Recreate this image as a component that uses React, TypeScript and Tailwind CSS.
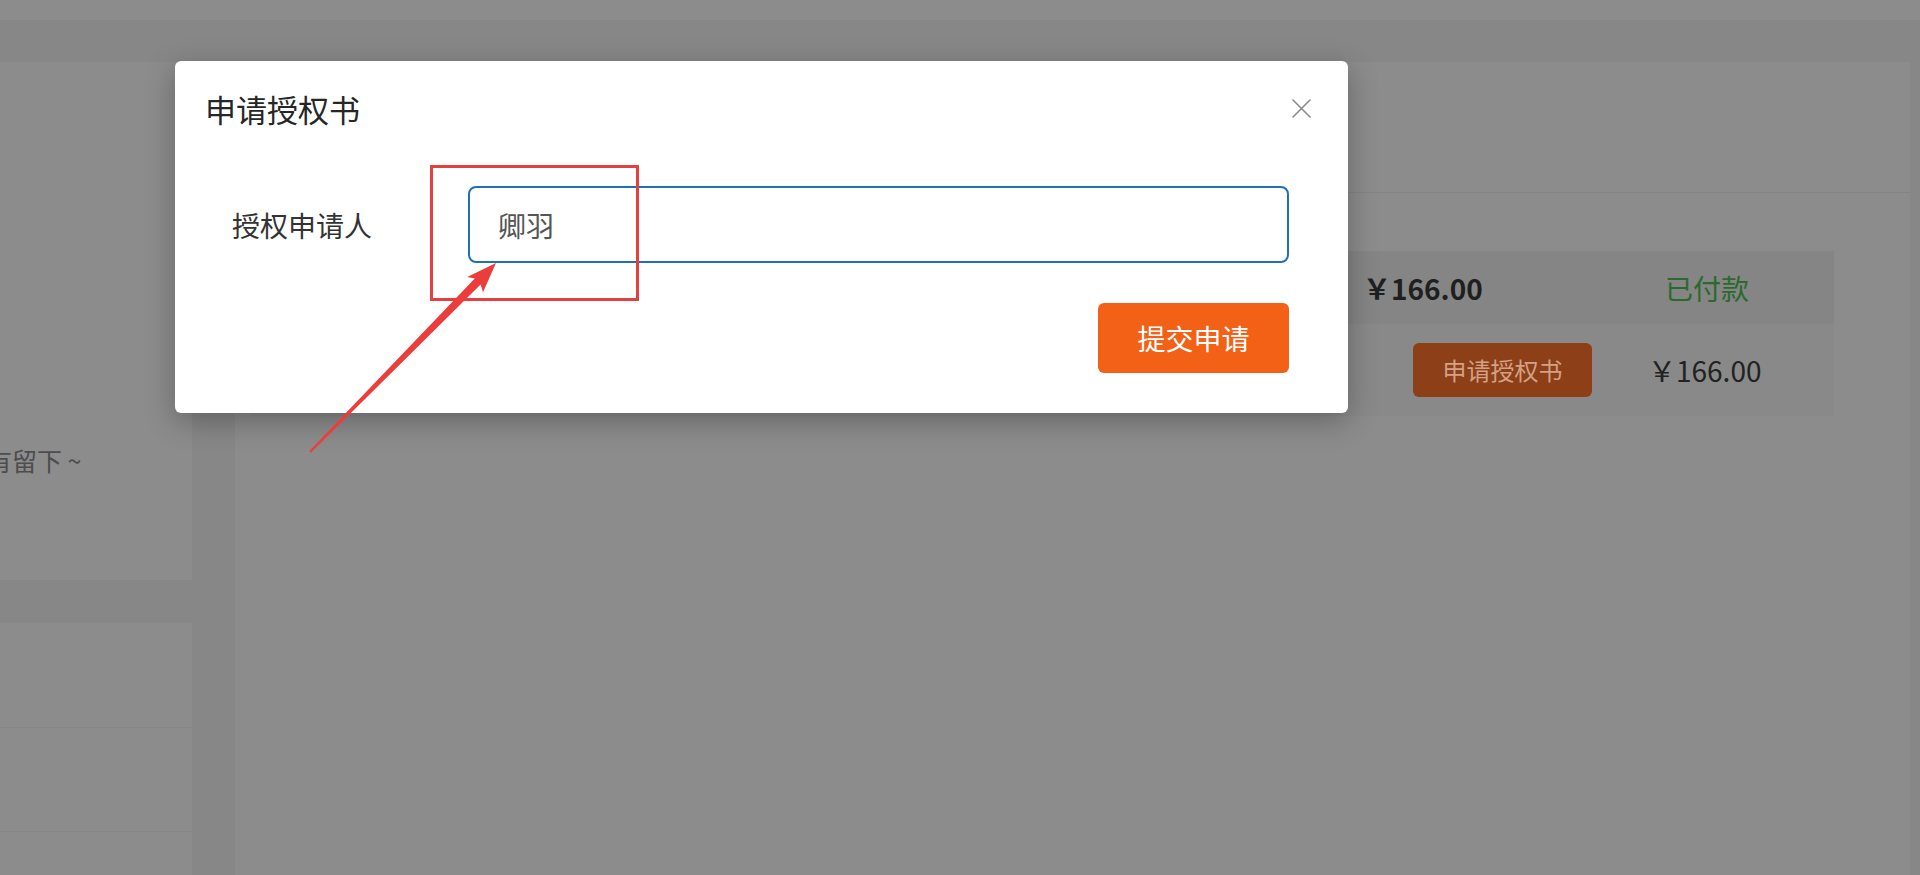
import React from "react";

function CloseIcon() {
  return (
    <svg width="19" height="19" viewBox="0 0 19 19" fill="none">
      <path d="M1 1 L18 18 M18 1 L1 18" stroke="#8a8a8a" strokeWidth="1.6" strokeLinecap="round" />
    </svg>
  );
}

export default function App() {
  return (
    <div className="relative h-[875px] w-[1920px] overflow-hidden bg-[#878787] font-['Noto_Sans_CJK_SC','Noto_Sans',sans-serif]">
      {/* dimmed page underneath */}
      <div className="h-[20px] bg-[#8c8c8c]" />
      <div className="h-[42px]" />
      <div className="flex h-[813px]">
        <div className="flex w-[192px] flex-col">
          <div className="h-[518px] overflow-hidden bg-[#8c8c8c] pt-[386px]">
            <div className="-ml-[13px] whitespace-nowrap text-[25px] leading-none text-[#4d4d4d]">有留下 ~</div>
          </div>
          <div className="h-[43px]" />
          <div className="flex-1 bg-[#8c8c8c]">
            <div className="h-[105px] border-b border-[#858585]" />
            <div className="h-[104px] border-b border-[#858585]" />
          </div>
        </div>
        <div className="w-[43px]" />
        <div className="w-[1675px] bg-[#8c8c8c]">
          <div className="h-[131px] border-b border-[#848484]" />
          <div className="pl-[16px] pr-[76px] pt-[58px]">
            <div className="flex h-[73px] items-center justify-end bg-[#858585]">
              <div className="flex w-[471px] items-center">
                <span className="w-[302px] whitespace-nowrap text-[28px] font-bold leading-none text-[#1f1f1f]">￥166.00</span>
                <span className="whitespace-nowrap text-[28px] leading-none text-[#2a6a2d]">已付款</span>
              </div>
            </div>
            <div className="flex h-[92px] items-center justify-end bg-[#898989]">
              <div className="flex h-[54px] w-[179px] items-center justify-center rounded-[6px] bg-[#8d3f17] text-[24px] leading-none text-[#d3a185]">
                申请授权书
              </div>
              <div className="w-[242px] pl-[56px] whitespace-nowrap text-[28px] leading-none text-[#222222]">￥166.00</div>
            </div>
          </div>
        </div>
      </div>

      {/* modal */}
      <div className="absolute left-[175px] top-[61px] w-[1173px] rounded-[6px] bg-white shadow-[0_8px_30px_rgba(0,0,0,0.28)]">
        <div className="flex h-[100px] items-center justify-between pb-[5px] pl-[30px] pr-[37px]">
          <div className="text-[31px] leading-none text-[#262626]">申请授权书</div>
          <CloseIcon />
        </div>
        <div className="mt-[25px] flex items-center pl-[57px] pr-[59px]">
          <div className="w-[236px] text-[28px] leading-none text-[#333333]">授权申请人</div>
          <input
            defaultValue="卿羽"
            className="h-[77px] flex-1 rounded-[8px] border-2 border-[#1f71b5] bg-white pl-[28px] text-[28px] text-[#555555] outline-none"
          />
        </div>
        <div className="mt-[40px] flex justify-end pb-[40px] pr-[59px]">
          <button className="flex h-[70px] w-[191px] items-center justify-center rounded-[6px] bg-[#f26116] text-[28px] leading-none text-white">
            提交申请
          </button>
        </div>
      </div>

      {/* annotation */}
      <svg className="pointer-events-none absolute left-0 top-0" width="1920" height="875" viewBox="0 0 1920 875">
        <rect x="431.5" y="166.5" width="206" height="133" fill="none" stroke="#e5403f" strokeWidth="3" />
        <polygon
          points="310.8,452.8 480.6,284.4 483,292.2 496,263 467.2,277 474.8,278.6 309.2,451.2"
          fill="#ec3d3d"
        />
      </svg>
    </div>
  );
}
